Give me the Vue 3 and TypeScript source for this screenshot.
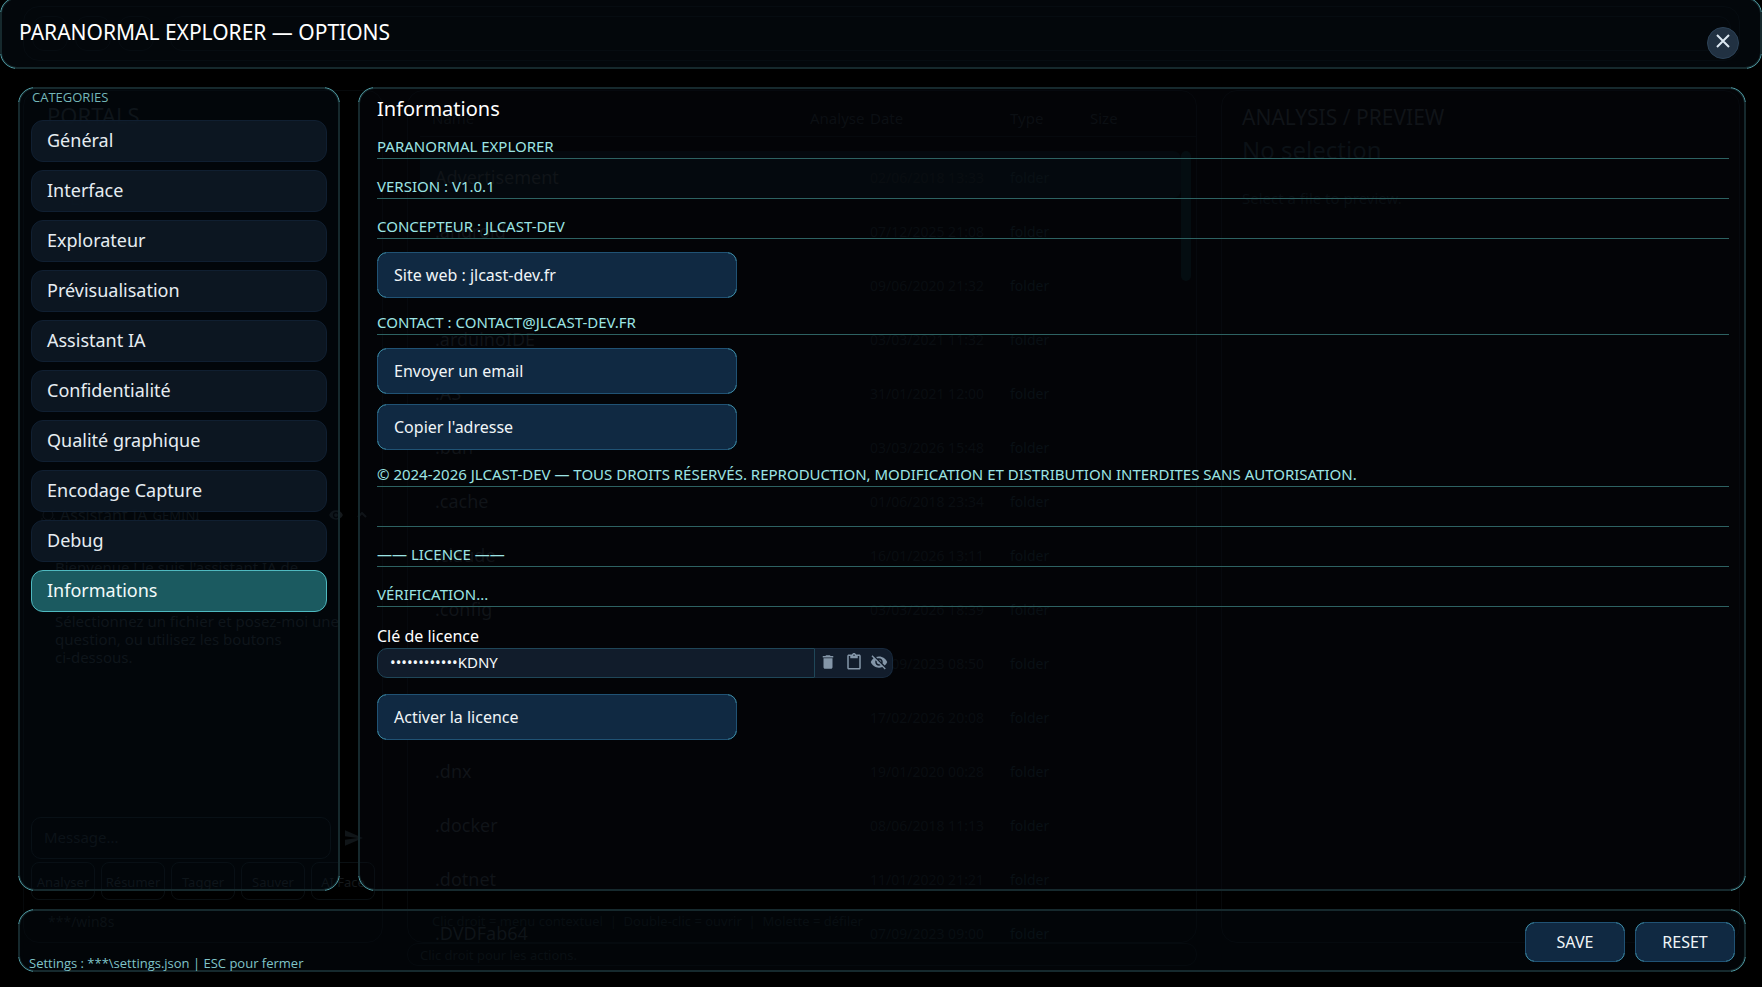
<script setup lang="ts">
import { ref } from 'vue'

interface FileRow { name: string; date: string }

const categories: string[] = [
  'Général', 'Interface', 'Explorateur', 'Prévisualisation', 'Assistant IA',
  'Confidentialité', 'Qualité graphique', 'Encodage Capture', 'Debug', 'Informations',
]
const active = ref('Informations')
const licenceKey = ref('••••••••••••KDNY')

const portals: string[] = ['', 'E:', 'F:', 'G:', 'K:', 'N:', '', 'Home']
const quickActions: string[] = ['Analyser', 'Résumer', 'Tagger', 'Sauver', 'AI Face']
const files: FileRow[] = [
  { name: 'Advertisement', date: '02/06/2018 13:33' },
  { name: '.android', date: '07/12/2025 21:08' },
  { name: 'ApplicationManager', date: '09/06/2020 21:32' },
  { name: '.arduinoIDE', date: '03/03/2021 11:32' },
  { name: '.AS', date: '31/01/2021 12:00' },
  { name: '.bun', date: '03/03/2026 15:48' },
  { name: '.cache', date: '01/06/2018 23:34' },
  { name: '.claude', date: '16/01/2026 13:11' },
  { name: '.config', date: '03/03/2026 18:39' },
  { name: '.dbus-keyrings', date: '07/09/2023 08:50' },
  { name: '.dj', date: '17/02/2026 20:08' },
  { name: '.dnx', date: '19/01/2020 00:28' },
  { name: '.docker', date: '08/06/2018 11:13' },
  { name: '.dotnet', date: '11/01/2020 21:21' },
  { name: '.DVDFab64', date: '07/09/2023 09:00' },
]
</script>

<template>
  <div class="screen">
    <!-- Explorer window, dimmed behind the options -->
    <div class="explorer" aria-hidden="true">
      <div class="ex-top">
        <span class="ex-tool"></span><span class="ex-tool"></span><span class="ex-tool"></span>
        <span class="ex-address"></span>
      </div>
      <div class="ex-cols">
        <div class="ex-box ex-left">
          <div class="ex-portals">PORTALS</div>
          <div class="ex-drives">
            <div v-for="(p, i) in portals" :key="i" class="ex-drive">{{ p }}</div>
          </div>
          <div class="ex-ai-head">
            <svg width="14" height="14" viewBox="0 0 14 14" fill="none" stroke="currentColor"><circle cx="7" cy="7" r="5" /><path d="M1 4V1h3M10 1h3v3M13 10v3h-3M4 13H1v-3" /></svg>
            <span>Assistant IA</span><small>GEMINI</small>
            <svg class="ex-eye" width="14" height="10" viewBox="1 4 22 16" fill="currentColor"><path d="M12 4.500C7 4.500 2.730 7.610 1 12c1.730 4.390 6 7.500 11 7.500s9.270-3.110 11-7.500C21.270 7.610 17 4.500 12 4.500zM12 17a5 5 0 1 1 0-10 5 5 0 0 1 0 10z" /><circle cx="12" cy="12" r="3" /></svg>
            <svg width="10" height="6" viewBox="0 0 10 6" fill="none" stroke="currentColor" stroke-width="2"><path d="M1 5l4-4 4 4" /></svg>
          </div>
          <p class="ex-chat">Bienvenue ! Je suis l'assistant IA de<br>ParanormalExplorer.<br><br>Sélectionnez un fichier et posez-moi une<br>question, ou utilisez les boutons<br>ci-dessous.</p>
          <div class="ex-compose">
            <span class="ex-message">Message...</span>
            <svg width="18" height="16" viewBox="2 3 21 18" fill="currentColor"><path d="M2 21L23 12 2 3v7l15 2-15 2z" /></svg>
          </div>
          <div class="ex-actions"><span v-for="a in quickActions" :key="a">{{ a }}</span></div>
          <div class="ex-path">***/win8s</div>
        </div>
        <div class="ex-mid">
          <div class="ex-box ex-files">
            <div class="ex-row ex-head"><span>Name</span><span>Analyse</span><span>Date</span><span>Type</span><span>Size</span></div>
            <div class="ex-list">
              <div v-for="f in files" :key="f.name" class="ex-row ex-file">
                <span class="ex-name">{{ f.name }}</span><span></span><span>{{ f.date }}</span><span class="ex-kind">folder</span><span></span>
              </div>
              <i class="ex-thumb"></i>
            </div>
            <div class="ex-hint">Clic droit = menu contextuel&nbsp; |&nbsp; Double-clic = ouvrir&nbsp; |&nbsp; Molette = défiler</div>
          </div>
          <div class="ex-box ex-status">Clic droit pour les actions.</div>
        </div>
        <div class="ex-box ex-preview">
          <div class="ex-pt">ANALYSIS / PREVIEW</div>
          <div class="ex-none">No selection</div>
          <div class="ex-sel">Select a file to preview.</div>
        </div>
      </div>
    </div>

    <div class="options">
      <header class="panel topbar">
        <h1>PARANORMAL EXPLORER — OPTIONS</h1>
        <button class="close" type="button" aria-label="Fermer">
          <svg width="16" height="16" viewBox="0 0 16 16" fill="none" stroke="#dce8f2" stroke-width="2"><path d="M2 2l12 12M14 2L2 14" /></svg>
        </button>
      </header>

      <div class="body">
        <nav class="panel sidebar" aria-label="Catégories">
          <h2>CATEGORIES</h2>
          <button
            v-for="c in categories" :key="c" type="button"
            class="cat" :class="{ on: c === active }" @click="active = c"
          >{{ c }}</button>
        </nav>

        <main class="panel content">
          <h2 class="heading">Informations</h2>
          <h3 class="row">PARANORMAL EXPLORER</h3>
          <h3 class="row">VERSION : V1.0.1</h3>
          <h3 class="row">CONCEPTEUR : JLCAST-DEV</h3>
          <button class="btn wide" type="button">Site web : jlcast-dev.fr</button>
          <h3 class="row">CONTACT : CONTACT@JLCAST-DEV.FR</h3>
          <button class="btn wide" type="button">Envoyer un email</button>
          <button class="btn wide" type="button">Copier l'adresse</button>
          <p class="row">© 2024-2026 JLCAST-DEV — TOUS DROITS RÉSERVÉS. REPRODUCTION, MODIFICATION ET DISTRIBUTION INTERDITES SANS AUTORISATION.</p>
          <div class="row"></div>
          <h3 class="row">—— LICENCE ——</h3>
          <p class="row">VÉRIFICATION...</p>
          <label class="key-label" for="licence-key">Clé de licence</label>
          <div class="key">
            <input id="licence-key" v-model="licenceKey" type="text">
            <div class="tools">
              <button type="button" aria-label="Effacer">
                <svg width="18" height="18" viewBox="0 0 24 24" fill="currentColor"><path d="M6 19c0 1.100.9 2 2 2h8c1.100 0 2-.9 2-2V7H6v12zM19 4h-3.500l-1-1h-5l-1 1H5v2h14V4z" /></svg>
              </button>
              <button type="button" aria-label="Coller">
                <svg width="18" height="18" viewBox="0 0 24 24" fill="currentColor"><path d="M19 2h-4.180C14.400.84 13.300 0 12 0S9.600.84 9.180 2H5c-1.100 0-2 .9-2 2v16c0 1.100.9 2 2 2h14c1.100 0 2-.9 2-2V4c0-1.100-.9-2-2-2zm-7 0a1 1 0 1 1 0 2 1 1 0 0 1 0-2zm7 18H5V4h2v3h10V4h2v16z" /></svg>
              </button>
              <button type="button" aria-label="Afficher la clé">
                <svg width="18" height="18" viewBox="0 0 24 24" fill="currentColor"><path d="M12 7c2.760 0 5 2.240 5 5 0 .65-.13 1.260-.36 1.830l2.920 2.920c1.510-1.260 2.700-2.890 3.430-4.750-1.730-4.390-6-7.500-11-7.500-1.400 0-2.740.25-3.980.7l2.160 2.160C10.740 7.130 11.350 7 12 7zM2 4.270l2.280 2.280.46.46C3.080 8.300 1.780 10.020 1 12c1.730 4.390 6 7.500 11 7.500 1.550 0 3.030-.3 4.380-.84l.42.42L19.730 22 21 20.730 3.270 3 2 4.270zM7.530 9.800l1.550 1.550c-.05.21-.08.43-.08.65 0 1.660 1.340 3 3 3 .22 0 .44-.03.65-.08l1.550 1.550c-.67.33-1.410.53-2.200.53-2.760 0-5-2.240-5-5 0-.79.2-1.530.53-2.200zm4.310-.78l3.150 3.150.02-.16c0-1.660-1.340-3-3-3l-.17.01z" /></svg>
              </button>
            </div>
          </div>
          <button class="btn wide" type="button">Activer la licence</button>
        </main>
      </div>

      <footer class="panel foot">
        <span class="note">Settings : ***\settings.json | ESC pour fermer</span>
        <button class="btn" type="button">SAVE</button>
        <button class="btn" type="button">RESET</button>
      </footer>
    </div>
  </div>
</template>

<style>
body { background: #000; }
</style>

<style scoped>
.screen {
  position: relative;
  height: 100vh;
  overflow: hidden;
  background: #000;
  font-family: "Noto Sans", "Open Sans", sans-serif;
  color: #fff;
}
.screen *, .screen *::before { box-sizing: border-box; }
h1, h2, h3, p { margin: 0; font-weight: 400; }
button, input { font-family: inherit; }
button { cursor: pointer; }

/* options overlay */
.options {
  position: absolute;
  inset: 0;
  display: flex;
  flex-direction: column;
  gap: 18px;
  padding-bottom: 15px;
}
.panel {
  position: relative;
  border: 2px solid #16292d;
  border-radius: 17px;
  background: rgba(8, 12, 20, 0.36);
}
.panel::before, .btn::before {
  content: "";
  position: absolute;
  inset: -2px;
  border: 1px solid #4f9ba3;
  border-radius: inherit;
  pointer-events: none;
  mask: linear-gradient(#000, #000) 0 0 / 15px 15px no-repeat,
    linear-gradient(#000, #000) 100% 0 / 15px 15px no-repeat,
    linear-gradient(#000, #000) 0 100% / 15px 15px no-repeat,
    linear-gradient(#000, #000) 100% 100% / 15px 15px no-repeat;
}
.topbar {
  display: flex;
  align-items: center;
  justify-content: space-between;
  height: 72px;
  margin-top: -3px;
  padding: 0 21px 0 17px;
  background: rgba(8, 18, 28, 0.4);
}
h1 { font-size: 21px; line-height: 28px; padding-bottom: 2px; }
.close {
  display: flex;
  justify-content: center;
  width: 32px;
  height: 32px;
  margin-top: 19px;
  padding: 5px 0 0;
  border: 1px solid #2c4257;
  border-radius: 50%;
  background: #213142;
}
.body {
  display: flex;
  flex: 1;
  gap: 18px;
  min-height: 0;
  padding: 0 16px 0 18px;
}
.sidebar {
  display: flex;
  flex: 0 0 322px;
  flex-direction: column;
  gap: 8px;
  padding: 0 11px;
  background: rgba(6, 14, 24, 0.4);
}
.sidebar h2 {
  padding-left: 1px;
  font-family: "Open Sans", sans-serif;
  font-size: 13px;
  line-height: 16px;
  height: 23px;
  color: #74b6b8;
}
.cat {
  height: 42px;
  padding: 0 15px 2px;
  border: 1px solid #101f31;
  border-radius: 12px;
  background: rgba(13, 23, 35, 0.94);
  color: #e6edf2;
  font-size: 18px;
  text-align: left;
}
.cat.on {
  border-color: #4fb9c0;
  background: rgba(28, 92, 98, 0.98);
  color: #f2fafa;
}
.content {
  flex: 1;
  min-width: 0;
  padding: 4px 15px 0 17px;
}
.heading { font-size: 20px; line-height: 32px; margin-bottom: 7px; }
.row {
  height: 27px;
  margin-bottom: 13px;
  border-bottom: 1px solid #2d6262;
  color: #9ce4e4;
  font-size: 15px;
  line-height: 28px;
  white-space: nowrap;
}
.btn {
  position: relative;
  display: block;
  width: 100px;
  height: 40px;
  padding: 0;
  border: 1px solid #205274;
  border-radius: 10px;
  background: rgba(17, 42, 68, 0.97);
  color: #f0f5f8;
  font-size: 16px;
  text-align: center;
}
.btn::before {
  inset: -1px;
  border-color: #4090a6;
  mask-size: 9px 9px;
}
.btn.wide {
  width: 360px;
  height: 46px;
  margin-bottom: 10px;
  padding-left: 16px;
  text-align: left;
}
.key-label {
  display: block;
  padding-top: 4px;
  font-size: 16px;
  line-height: 24px;
}
.key {
  display: flex;
  width: 516px;
  height: 30px;
  margin-bottom: 16px;
}
.key input {
  flex: 1;
  min-width: 0;
  padding: 0 12px 2px;
  border: 1px solid #1f4658;
  border-radius: 10px 0 0 10px;
  background: rgba(18, 29, 44, 0.97);
  color: #f4f8fa;
  font-size: 15px;
}
.tools {
  display: flex;
  align-items: center;
  width: 78px;
  border: 1px solid #182a3d;
  border-left: 0;
  border-radius: 0 10px 10px 0;
  background: #121d2c;
}
.tools button {
  display: flex;
  flex: 1;
  justify-content: center;
  padding: 0 0 2px;
  border: 0;
  background: none;
  color: #8496a8;
}
.foot {
  display: flex;
  flex: 0 0 63px;
  align-items: flex-start;
  gap: 10px;
  margin: 0 16px 0 18px;
  padding: 11px 9px 0 9px;
  background: rgba(6, 13, 21, 0.4);
}
.note {
  flex: 1;
  align-self: flex-end;
  font-family: "Open Sans", sans-serif;
  font-size: 13px;
  line-height: 14px;
  color: #80c4c8;
}

/* dimmed explorer */
.explorer {
  position: absolute;
  inset: 0;
  display: flex;
  flex-direction: column;
  gap: 29px;
  padding: 6px 22px 21px 23px;
  color: #15191c;
  font-size: 14px;
}
.ex-top {
  display: flex;
  gap: 7px;
  height: 55px;
  padding: 9px 8px;
  border: 1px solid #06090b;
  border-radius: 16px;
}
.ex-tool { width: 36px; border: 1px solid #06090b; border-radius: 12px; }
.ex-address { flex: 1; margin-left: 9px; border: 1px solid #06090b; border-radius: 12px; }
.ex-cols { display: flex; flex: 1; gap: 24px; min-height: 0; }
.ex-box { border: 1px solid #06090b; border-radius: 16px; }
.ex-left { flex: 0 0 360px; margin-bottom: 23px; padding: 9px 0 0 7px; }
.ex-portals { padding-left: 16px; font-size: 22px; line-height: 30px; }
.ex-drives { height: 373px; }
.ex-drive { height: 48px; padding-left: 39px; font-size: 18px; line-height: 40px; }
.ex-ai-head { display: flex; align-items: center; gap: 5px; height: 24px; padding-left: 10px; font-size: 16px; }
.ex-ai-head small { font-size: 13px; }
.ex-eye { margin-left: 124px; margin-right: 9px; }
.ex-chat { height: 272px; padding: 31px 0 0 24px; font-size: 15px; line-height: 18px; white-space: nowrap; }
.ex-compose { display: flex; align-items: center; gap: 14px; height: 42px; margin-top: 18px; color: #101518; }
.ex-message { flex: 0 0 300px; height: 42px; padding-left: 12px; border: 1px solid #0b1114; border-radius: 10px; line-height: 38px; font-size: 15px; }
.ex-actions { display: flex; gap: 6px; margin-top: 3px; }
.ex-actions span { flex: 0 0 64px; height: 38px; border: 1px solid #0a1013; border-radius: 8px; font-size: 13px; line-height: 38px; text-align: center; }
.ex-path { padding: 12px 0 0 17px; color: #0f1416; line-height: 20px; }
.ex-mid { display: flex; flex: 0 0 790px; flex-direction: column; min-width: 0; }
.ex-files { position: relative; flex: 1; min-height: 0; padding: 10px 0 0 12px; }
.ex-row { display: grid; grid-template-columns: 390px 60px 140px 80px 1fr; align-items: center; }
.ex-head { height: 36px; padding-bottom: 2px; font-size: 15px; color: #0e1214; border-bottom: 1px solid #05090a; }
.ex-head span:first-child { padding-left: 12px; }
.ex-list { position: relative; padding-top: 14px; }
.ex-file { height: 47px; margin: 0 15px 7px 0; padding-top: 5px; color: #0a0f11; border-radius: 8px; }
.ex-file:first-child { background: #02090b; }
.ex-name { padding-left: 15px; font-size: 18px; color: #15191c; }
.ex-kind { color: #0a1417; }
.ex-thumb { position: absolute; top: 14px; right: 5px; width: 10px; height: 130px; border-radius: 5px; background: #030f10; }
.ex-hint { position: absolute; left: 24px; bottom: 12px; font-size: 13px; color: #0b1012; white-space: nowrap; }
.ex-status { height: 23px; padding-left: 12px; border-radius: 11px; font-size: 13px; line-height: 23px; color: #0d1214; }
.ex-preview { flex: 1; margin-bottom: 23px; padding: 11px 0 0 20px; }
.ex-pt { font-size: 21px; line-height: 30px; }
.ex-none { font-size: 24px; line-height: 36px; color: #0e1518; }
.ex-sel { padding-top: 18px; font-size: 15px; line-height: 24px; color: #0a1113; }
</style>
